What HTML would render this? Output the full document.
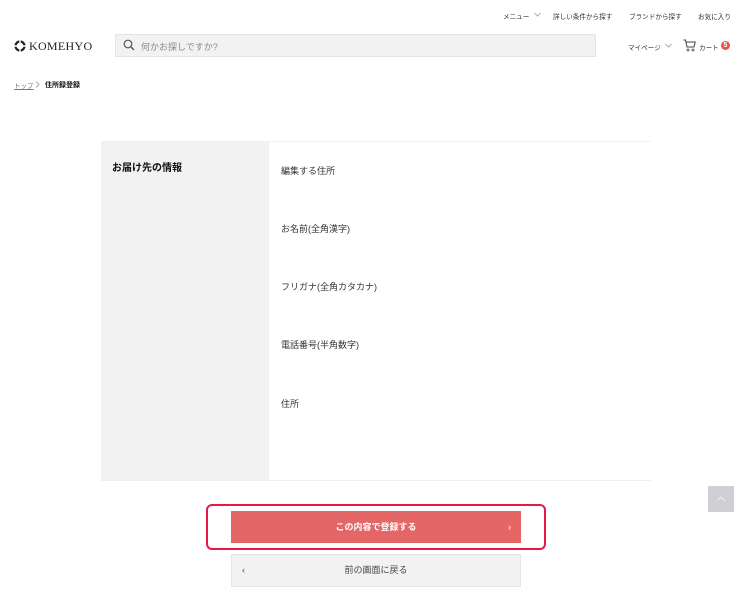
<!DOCTYPE html>
<html><head><meta charset="utf-8"><style>
*{margin:0;padding:0;box-sizing:border-box}
body{width:750px;height:610px;background:#fff;font-family:"Liberation Sans","Noto Sans CJK JP",sans-serif;color:#333;position:relative;overflow:hidden}
.a{position:absolute;white-space:nowrap}
.top{font-size:6.6px;color:#333;top:11px}
</style></head><body>
<div class="a top" style="left:503px">メニュー</div>
<svg class="a" style="left:534px;top:12px" width="7" height="5"><path d="M0.5 1l3 3 3-3" fill="none" stroke="#999" stroke-width=".8"/></svg>
<div class="a top" style="left:553px">詳しい条件から探す</div>
<div class="a top" style="left:629px">ブランドから探す</div>
<div class="a top" style="left:698px">お気に入り</div>

<svg class="a" style="left:14px;top:40px" width="12" height="12" viewBox="0 0 12 12"><circle cx="6" cy="6" r="4.5" fill="none" stroke="#222" stroke-width="2.2"/><path d="M6 0v3M6 9v3M0 6h3M9 6h3" stroke="#fff" stroke-width="1.4"/></svg>
<div class="a" style="left:29px;top:39px;font-family:'Liberation Serif',serif;font-size:12px;letter-spacing:0.3px;color:#222">KOMEHYO</div>

<div class="a" style="left:115px;top:34px;width:481px;height:23px;background:#f2f2f2;border:1px solid #e4e4e4"></div>
<svg class="a" style="left:123px;top:39px" width="12" height="12" viewBox="0 0 12 12"><circle cx="5" cy="5" r="3.8" fill="none" stroke="#555" stroke-width="1.2"/><path d="M8 8l3 3" stroke="#555" stroke-width="1.3"/></svg>
<div class="a" style="left:141px;top:40px;font-size:9px;color:#888">何かお探しですか?</div>

<div class="a" style="left:628px;top:42px;font-size:6.6px">マイページ</div>
<svg class="a" style="left:665px;top:43px" width="7" height="5"><path d="M0.5 1l3 3 3-3" fill="none" stroke="#999" stroke-width=".8"/></svg>
<svg class="a" style="left:683px;top:39px" width="13" height="13" viewBox="0 0 13 13"><path d="M0.5 1h2l1.5 7h7l1.2-5H3" fill="none" stroke="#444" stroke-width="1"/><circle cx="5" cy="11" r="1" fill="none" stroke="#444" stroke-width=".8"/><circle cx="10" cy="11" r="1" fill="none" stroke="#444" stroke-width=".8"/></svg>
<div class="a" style="left:699px;top:42px;font-size:6.6px">カート</div>
<div class="a" style="left:721px;top:41px;width:9px;height:9px;border-radius:50%;background:#e8534e;color:#fff;font-size:7px;font-weight:bold;text-align:center;line-height:9px">5</div>

<div class="a" style="left:14px;top:80px;font-size:6.5px;color:#777;text-decoration:underline">トップ</div>
<svg class="a" style="left:35px;top:81px" width="5" height="7"><path d="M1 0.5l3 3-3 3" fill="none" stroke="#999" stroke-width=".8"/></svg>
<div class="a" style="left:45px;top:80px;font-size:7px;font-weight:bold;color:#111">住所録登録</div>

<div class="a" style="left:101px;top:141px;width:550px;height:1px;background:#f0f0f0"></div>
<div class="a" style="left:101px;top:142px;width:168px;height:339px;background:#f2f2f2"></div>
<div class="a" style="left:101px;top:480px;width:550px;height:1px;background:#eee"></div>
<div class="a" style="left:112px;top:159px;font-size:10px;font-weight:bold;color:#111">お届け先の情報</div>
<div class="a" style="left:281px;top:164px;font-size:9px">編集する住所</div>
<div class="a" style="left:281px;top:222px;font-size:9px">お名前(全角漢字)</div>
<div class="a" style="left:281px;top:280px;font-size:9px">フリガナ(全角カタカナ)</div>
<div class="a" style="left:281px;top:338px;font-size:9px">電話番号(半角数字)</div>
<div class="a" style="left:281px;top:397px;font-size:9px">住所</div>

<div class="a" style="left:708px;top:486px;width:26px;height:26px;background:#cfd0d6"><svg width="26" height="26"><path d="M9 15l4-4 4 4" fill="none" stroke="#eee" stroke-width="1"/></svg></div>

<div class="a" style="left:206px;top:504px;width:340px;height:46px;border:2px solid #e8174a;border-radius:6px"></div>
<div class="a" style="left:231px;top:511px;width:290px;height:32px;background:#e56667;color:#fff;font-size:9px;font-weight:bold;text-align:center;line-height:32px">この内容で登録する<span style="position:absolute;right:10px;font-weight:normal">›</span></div>

<div class="a" style="left:231px;top:554px;width:290px;height:33px;background:#f2f2f2;border:1px solid #e6e6e6;color:#444;font-size:9px;text-align:center;line-height:31px"><span style="position:absolute;left:10px">‹</span>前の画面に戻る</div>
</body></html>
